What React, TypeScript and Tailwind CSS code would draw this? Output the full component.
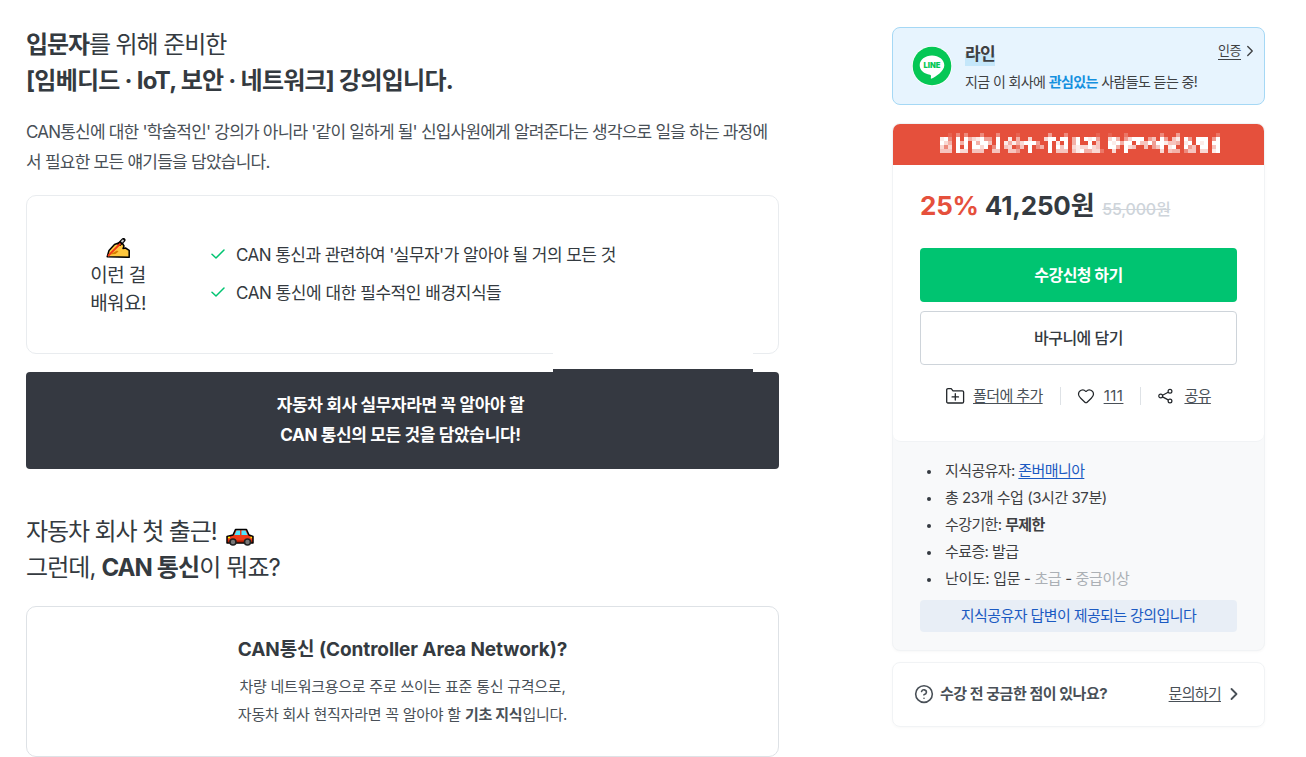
import { ReactNode } from "react";
import { ChevronRight, CircleHelp, Heart } from "lucide-react";
import clsx from "clsx";

// Censored promo text, one digit per 4px block (higher = brighter)
const mosaic = [
    "..1.3.3...3...3....1.......4...3..." + "....1..1...2........3...4.........2",
    "893.9.9578944.9..8.5..7...799.99.59" + ".9894..795.47999.46.94.68.94.999.49",
    "975.959.95996.9.858579994..9.8.9.59" + "..9.6..989599.9669499866" + "5.89.989.99",
    "737.9.9.9979.39.67.26.9.35.9.969.78" + "77976..995.976..6.469.89..946.99.69",
    "666.977.666..66..664..9....9.666.68" + "955772..7..9........7.655.366.77.89",
];

const features = [
    { text: "CAN 통신과 관련하여 '실무자'가 알아야 될 거의 모든 것", tracking: "tracking-[-0.55px]" },
    { text: "CAN 통신에 대한 필수적인 배경지식들", tracking: "tracking-[-0.45px]" },
];

function Mosaic() {
    return (
        <svg width="280" height="20" viewBox="0 0 280 20" shapeRendering="crispEdges">
            {mosaic.map((row, y) =>
                row.split("").map((level, x) =>
                    level === "." ? null : (
                        <rect key={`${x}-${y}`} x={x * 4} y={y * 4} width="4" height="4" fill="#fff" fillOpacity={Number(level) / 9} />
                    )
                )
            )}
        </svg>
    );
}

function WritingHand() {
    return (
        <svg width="24" height="20" viewBox="0 0 24 20" fill="none">
            <path d="M1.200 18.800 3 12.500l5.500-6 4-1.500 4 .5 1.500 2.500-1 2.500 2.500-.5 3.700 2.300v7z" fill="#FFC83D" stroke="#000" strokeWidth="1.500" strokeLinejoin="round" />
            <path d="m4 16.500 7-4 1.500 1-3 2.500z" fill="#D67D00" />
            <path d="M13.500 6 17.500 2" stroke="#000" strokeWidth="4" strokeLinecap="round" />
            <path d="m2 18 12.500-12.500" stroke="#F03A17" strokeWidth="1.800" />
            <path d="m15.500 4 2-2" stroke="#ccc" strokeWidth="1.800" />
        </svg>
    );
}

function Car() {
    return (
        <svg width="28" height="18" viewBox="0 0 28 18">
            <path d="M1 8.500 7 7l2.500-5.500h11L23 7l4 1.500V15H1z" fill="#F03A17" stroke="#000" strokeWidth="1.500" strokeLinejoin="round" />
            <path d="m8.500 7 2-4.500H14V7zM15.500 7V2.500h4L21.500 7z" fill="#4FE5FF" />
            <path d="M2 12.500h24V14H2z" fill="#AE1F05" />
            <path d="M2 9.500h2M24.500 9.500h1.500" stroke="#FFF100" strokeWidth="1.500" />
            <circle cx="7" cy="14" r="3" fill="#777" stroke="#222" strokeWidth="1.600" />
            <circle cx="21.500" cy="14" r="3" fill="#777" stroke="#222" strokeWidth="1.600" />
        </svg>
    );
}

function LineLogo() {
    return (
        <svg width="40" height="40" viewBox="0 0 40 40">
            <circle cx="20" cy="20" r="20" fill="#fff" />
            <circle cx="20" cy="20" r="19.300" fill="#06C755" />
            <path d="M20 9.500c-6.900 0-12.300 4.300-12.300 9.700 0 4.800 4.300 8.700 10.300 9.500 1.400.3 1 1.400.8 3.300 0 .6.3.8 1 .5 4-2 12.500-7.300 12.500-13.300 0-5.400-5.400-9.700-12.300-9.700z" fill="#fff" />
            <text x="20" y="21.800" textAnchor="middle" textLength="17" lengthAdjust="spacingAndGlyphs" fontSize="7.500" fontWeight="900" fill="#06C755" fontFamily="Inter, sans-serif">LINE</text>
        </svg>
    );
}

function CheckIcon() {
    return (
        <svg className="mr-[11px] mb-[5px] ml-[2px]" width="14" height="12" viewBox="0 0 14 12" fill="none" stroke="#00c471" strokeWidth="1.500" strokeLinecap="round" strokeLinejoin="round">
            <path d="M1 6.300 5 10l8-8" />
        </svg>
    );
}

function FolderIcon() {
    return (
        <svg width="20" height="18" viewBox="0 0 20 18" fill="none" stroke="#212529" strokeWidth="1.300" strokeLinejoin="round" strokeLinecap="round">
            <path d="M1.700 3c0-.8.5-1.300 1.300-1.300h3.200L8 3.800h9.300c.8 0 1.300.5 1.300 1.300v9.600c0 .8-.5 1.300-1.300 1.300H3c-.8 0-1.300-.5-1.300-1.300z" />
            <path d="M10.300 6.700v6.400M7.100 9.900h6.400" />
        </svg>
    );
}

function ShareIcon() {
    return (
        <svg width="15" height="16" viewBox="0 0 15 16" fill="none" stroke="#212529" strokeWidth="1.200">
            <circle cx="2.700" cy="8" r="1.900" />
            <circle cx="12" cy="3.300" r="1.900" />
            <circle cx="12" cy="13" r="1.900" />
            <path d="m4.500 7.200 5.700-3M4.500 8.900l5.700 3" />
        </svg>
    );
}

function InfoItem({ children, className = "tracking-[-0.6px]" }: { children: ReactNode; className?: string }) {
    return (
        <li className={clsx("flex h-[27px] items-center", className)}>
            <span className="mr-[14px] ml-[7px] size-1 rounded-full bg-[#343a40]" />
            <span>{children}</span>
        </li>
    );
}

function CourseIntro() {
    return (
        <main className="w-[753px] shrink-0">
            <h2 className="h-[72px] text-2xl leading-9 text-[#343a40]">
                <div className="tracking-[-1.1px]"><strong>입문자</strong>를 위해 준비한</div>
                <div className="font-bold tracking-[-0.75px]">[임베디드 · IoT, 보안 · 네트워크] 강의입니다.</div>
            </h2>

            <div className="mt-[18px] text-[17px] leading-[30px] text-[#495057]">
                <div className="tracking-[-0.8px]">CAN통신에 대한 '학술적인' 강의가 아니라 '같이 일하게 될' 신입사원에게 알려준다는 생각으로 일을 하는 과정에</div>
                <div className="tracking-[-0.75px]">서 필요한 모든 얘기들을 담았습니다.</div>
            </div>

            <section className="relative mt-[18px] flex h-[159px] items-center rounded-[10px] border border-[#e9ecef]">
                <div className="flex w-[182px] flex-col items-center pt-1.5 text-[19px] leading-7 tracking-[-0.55px] text-[#343a40]">
                    <WritingHand />
                    <div className="mt-1">이런 걸</div>
                    <div>배워요!</div>
                </div>
                <ul className="pt-px">
                    {features.map((feature) => (
                        <li key={feature.text} className="flex h-[38px] items-center text-[17px] text-[#343a40]">
                            <CheckIcon />
                            <span className={feature.tracking}>{feature.text}</span>
                        </li>
                    ))}
                </ul>
                <div className="absolute top-[155px] left-[526px] h-[18px] w-[200px] bg-white" />
                <div className="absolute top-[173px] left-[526px] h-[4px] w-[200px] bg-[#353941]" />
            </section>

            <section className="mt-[18px] flex h-[97px] flex-col items-center justify-center rounded-[4px] bg-[#353941] pr-1 pb-0.5 text-[17px] leading-[30px] font-bold text-white">
                <div className="tracking-[-0.35px]">자동차 회사 실무자라면 꼭 알아야 할</div>
                <div className="tracking-[-0.35px]">CAN 통신의 모든 것을 담았습니다!</div>
            </section>

            <h2 className="mt-[45px] h-[72px] text-2xl leading-9 text-[#343a40]">
                <div className="flex tracking-[-1.1px]">자동차 회사 첫 출근!<span className="mt-[14px] ml-[9px]"><Car /></span></div>
                <div className="tracking-[-0.9px]">그런데, <strong>CAN 통신</strong>이 뭐죠?</div>
            </h2>

            <section className="mt-[20px] flex h-[151px] flex-col items-center rounded-[10px] border border-[#dee2e6] pt-[28px]">
                <h3 className="text-[19px] leading-[30px] font-bold tracking-[-0.08px] text-[#343a40]">CAN통신 (Controller Area Network)?</h3>
                <div className="mt-[8px] text-[15px] leading-7 text-[#495057]">
                    <div className="text-center tracking-[-0.25px]">차량 네트워크용으로 주로 쓰이는 표준 통신 규격으로,</div>
                    <div className="text-center tracking-[-0.25px]">자동차 회사 현직자라면 꼭 알아야 할 <strong>기초 지식</strong>입니다.</div>
                </div>
            </section>
        </main>
    );
}

function CompanyCard() {
    return (
        <section className="flex h-[78px] rounded-lg border border-[#a5d8f5] bg-[#e7f4fe] pl-[19px] text-[#3e4042]">
            <div className="mt-[18px] mr-[13px]"><LineLogo /></div>
            <div className="flex-1 pt-[14px]">
                <div className="flex h-6">
                    <strong className="h-6 bg-[linear-gradient(transparent_50%,#c5e7fa_50%)] text-[17px] leading-6 tracking-[-0.7px]">라인</strong>
                </div>
                <div className="mt-[4px] text-sm leading-6 tracking-[-0.6px]">
                    지금 이 회사에 <strong className="text-[#1590de]">관심있는</strong> 사람들도 듣는 중!
                </div>
            </div>
            <a className="mt-[14px] mr-[5px] flex h-[18px] items-center text-[13px] tracking-[-0.5px]">
                <span className="border-b border-[#3e4042] leading-[17px]">인증</span>
                <ChevronRight className="size-[18px]" strokeWidth={1.8} />
            </a>
        </section>
    );
}

function PriceCard() {
    return (
        <section className="mt-[18px] h-[528px] overflow-hidden rounded-lg border border-[#f1f3f5] bg-[#f8f9fa] shadow-[0_1px_3px_rgba(0,0,0,0.03)]">
            <div className="h-[318px] rounded-b-lg border-b border-[#f1f3f5] bg-white">
                <div className="flex h-[41px] items-center justify-center bg-[#e5503c] pb-[3px] pl-[3px]">
                    <Mosaic />
                </div>
                <div className="px-[27px] pt-[23px]">
                    <div className="flex h-9 items-baseline leading-9 font-bold">
                        <span className="text-[26px] tracking-[-0.2px] text-[#e5503c]">25%</span>
                        <span className="ml-[6px] text-[26px] tracking-[-0.2px] text-[#343a40]">41,250원</span>
                        <del className="ml-[8px] text-base font-medium tracking-[-0.2px] text-[#ced4da]">55,000원</del>
                    </div>
                    <button className="mt-[24px] flex h-[54px] w-full items-center justify-center rounded-[4px] bg-[#00c471] text-base font-bold tracking-[-0.5px] text-white">수강신청 하기</button>
                    <button className="mt-[9px] flex h-[54px] w-full items-center justify-center rounded-[4px] border border-[#ced4da] text-base font-medium tracking-[-0.5px] text-[#343a40]">바구니에 담기</button>
                    <div className="mt-[21px] flex h-5 items-center pl-[25px] text-[15px] tracking-[-0.6px] text-[#495057]">
                        <FolderIcon />
                        <span className="ml-2 underline underline-offset-2">폴더에 추가</span>
                        <span className="mr-4 ml-[17px] h-[18px] w-px bg-[#dee2e6]" />
                        <Heart className="size-[18px] text-[#212529]" strokeWidth={1.6} />
                        <span className="ml-[9px] tracking-[0.5px] underline underline-offset-2">111</span>
                        <span className="mr-[17px] ml-[17px] h-[18px] w-px bg-[#dee2e6]" />
                        <ShareIcon />
                        <span className="ml-[11px] underline underline-offset-2">공유</span>
                    </div>
                </div>
            </div>

            <div className="px-[27px] pt-[16px]">
                <ul className="text-[15px] text-[#3e4042]">
                    <InfoItem>지식공유자: <a className="text-[#1b5ac2] underline underline-offset-2">존버매니아</a></InfoItem>
                    <InfoItem className="tracking-[-0.45px]">총 23개 수업 (3시간 37분)</InfoItem>
                    <InfoItem>수강기한: <strong>무제한</strong></InfoItem>
                    <InfoItem>수료증: 발급</InfoItem>
                    <InfoItem className="tracking-[-0.35px]">난이도: 입문 - <span className="text-[#abb0b5]">초급</span> - <span className="text-[#abb0b5]">중급이상</span></InfoItem>
                </ul>
                <div className="mt-[7px] flex h-8 items-center justify-center rounded-[4px] bg-[#e8eef6] text-[15px] tracking-[-0.6px] text-[#1b5ac2]">지식공유자 답변이 제공되는 강의입니다</div>
            </div>
        </section>
    );
}

function ContactCard() {
    return (
        <section className="mt-[11px] flex h-[65px] items-center rounded-lg border border-[#f1f3f5] pr-[20px] pb-px pl-[21px] text-[15px] tracking-[-0.7px] text-[#495057] shadow-[0_1px_3px_rgba(0,0,0,0.03)]">
            <CircleHelp className="mr-[6px] size-5" strokeWidth={1.9} />
            <strong className="tracking-[-0.45px]">수강 전 궁금한 점이 있나요?</strong>
            <a className="ml-auto underline underline-offset-2">문의하기</a>
            <ChevronRight className="ml-[3px] size-5" strokeWidth={2.2} />
        </section>
    );
}

export default function App() {
    return (
        <div className="flex h-[757px] w-[1306px] overflow-hidden bg-white pl-[26px] font-['Inter','Noto_Sans_CJK_KR',sans-serif] whitespace-nowrap">
            <div className="pt-[27px]">
                <CourseIntro />
            </div>
            <aside className="ml-[113px] w-[373px] shrink-0 pt-[27px]">
                <CompanyCard />
                <PriceCard />
                <ContactCard />
            </aside>
        </div>
    );
}
